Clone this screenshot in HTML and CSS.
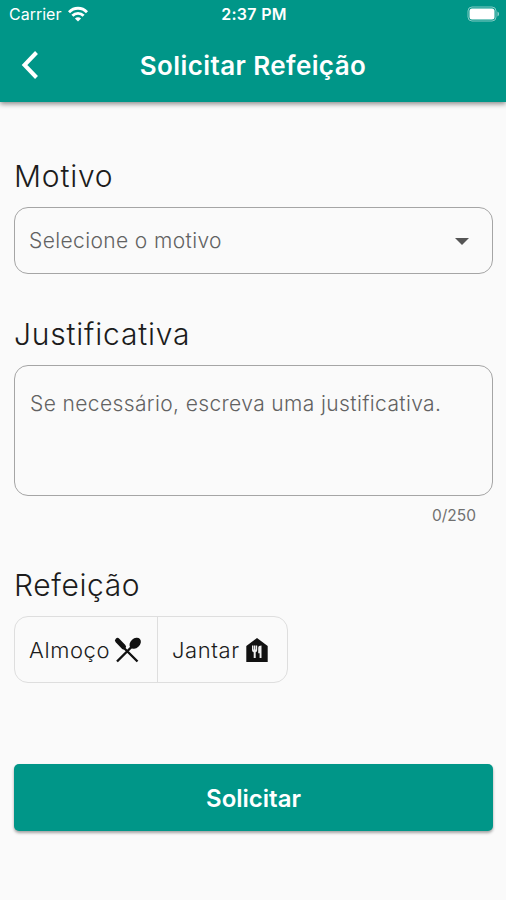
FILE: index.html
```html
<!DOCTYPE html>
<html lang="pt-BR">
<head>
    <meta charset="UTF-8">
    <meta name="viewport" content="width=device-width, initial-scale=1.0">
    <title>Solicitar Refeição</title>
    <link rel="stylesheet" href="styles.css">
</head>
<body>
    <header class="app-bar">
        <div class="status-bar">
            <div class="carrier">
                <span>Carrier</span>
                <svg class="wifi" viewBox="0 0 20 16" fill="none" stroke="#fff" stroke-width="2.9">
                    <path d="M1 6.2C6 1 14 1 19 6.2"/>
                    <path d="M4.4 9.8C7.5 6.6 12.5 6.6 15.6 9.8"/>
                    <path d="M10 15.6L6.9 12.5C8.7 10.8 11.3 10.8 13.1 12.5Z" fill="#fff" stroke="none"/>
                </svg>
            </div>
            <span class="clock">2:37 PM</span>
            <svg class="battery" viewBox="0 0 34 16">
                <rect x="1" y="1" width="28" height="14" rx="4" fill="none" stroke="#fff" stroke-opacity=".5"/>
                <rect x="2.5" y="2.5" width="25" height="11" rx="2.5" fill="#fff"/>
                <path d="M30.5 5.5C32.5 6.5 32.5 9.5 30.5 10.5Z" fill="#fff" fill-opacity=".6"/>
            </svg>
        </div>
        <div class="toolbar">
            <button type="button" class="back" aria-label="Voltar">
                <svg viewBox="0 0 20 30" fill="none" stroke="#fff" stroke-width="4">
                    <path d="M16.5 2.5L4.5 15L16.5 27.5"/>
                </svg>
            </button>
            <h1>Solicitar Refeição</h1>
        </div>
    </header>

    <form class="meal-form">
        <section class="field">
            <h2>Motivo</h2>
            <div class="box select">
                <span>Selecione o motivo</span>
                <svg class="arrow" viewBox="0 0 14 7"><path d="M0 0h14L7 7z" fill="#555"/></svg>
            </div>
        </section>

        <section class="field">
            <h2>Justificativa</h2>
            <div class="box textarea">Se necessário, escreva uma justificativa.</div>
            <div class="counter">0/250</div>
        </section>

        <section class="field">
            <h2 class="meal-title">Refeição</h2>
            <div class="toggle">
                <div class="option">
                    <span class="label">Almoço</span>
                    <!-- crossed knife and spoon -->
                    <svg class="icon" viewBox="0 0 32 32">
                        <path d="M5.500 6.500L11.500 12.800" fill="none" stroke="#111" stroke-width="5" stroke-linecap="round"/>
                        <ellipse cx="23.200" cy="9.200" rx="6.400" ry="4.700" transform="rotate(-42 23.200 9.200)"/>
                        <path d="M20 12.500L5 27.500M11 13L25.500 27.500" fill="none" stroke="#111" stroke-width="2.400"/>
                    </svg>
                </div>
                <div class="option">
                    <span class="label">Jantar</span>
                    <!-- house with fork and knife -->
                    <svg class="icon" viewBox="0 0 32 32">
                        <path d="M16 4L5.300 12V28H26.700V12z"/>
                        <path d="M11 11.500h1.500v4h.5v-4h1.500v4h.5v-4h1.200v4.500c0 1.300-.7 2-1.500 2.200V24h-2v-5.800c-1-.2-1.700-.9-1.700-2.200zM17.200 13.800c0-1.400 1.200-2.300 3.300-2.300V24h-1.900v-4.800h-1.400z" fill="#eee"/>
                    </svg>
                </div>
            </div>
        </section>

        <button type="button" class="submit">Solicitar</button>
    </form>
</body>
</html>
```

FILE: styles.css
```css
* {
    box-sizing: border-box;
}
body {
    margin: 0;
    min-height: 900px;
    background-color: #fafafa;
    color: #1c1c1c;
    font-family: Inter, "Liberation Sans", sans-serif;
}
.app-bar {
    height: 102px;
    background-color: #009688;
    color: white;
    box-shadow: 0 2px 5px rgba(0, 0, 0, 0.45);
}
.status-bar {
    display: grid;
    grid-template-columns: 1fr auto 1fr;
    align-items: center;
    height: 28px;
    padding: 0 5px 0 9px;
    font-size: 16px;
}
.carrier {
    display: flex;
    align-items: center;
    gap: 7px;
}
.wifi {
    width: 20px;
    height: 16px;
}
.clock {
    margin-right: 2px;
    font-weight: 600;
    letter-spacing: 0.3px;
}
.battery {
    width: 34px;
    height: 16px;
    justify-self: end;
}
.toolbar {
    display: grid;
    grid-template-columns: 60px 1fr 60px;
    align-items: center;
    height: 74px;
}
.back {
    padding: 0 0 0 20px;
    border: none;
    background: none;
    text-align: left;
}
.back svg {
    display: block;
    width: 20px;
    height: 30px;
}
h1 {
    margin: 0;
    padding-top: 2px;
    text-align: center;
    font-size: 26px;
    font-weight: 600;
    line-height: 72px;
    letter-spacing: 0.4px;
}
.meal-form {
    padding: 55px 13px 0 14px;
}
h2 {
    margin: 0;
    height: 50px;
    font-size: 30px;
    font-weight: 300;
    line-height: 38px;
    letter-spacing: 0.8px;
}
.meal-title {
    letter-spacing: 0.6px;
}
.box {
    border: 1px solid #a5a5a5;
    border-radius: 14px;
    color: #626262;
    font-size: 21px;
    font-weight: 300;
    letter-spacing: 0.38px;
}
.select {
    display: flex;
    align-items: center;
    justify-content: space-between;
    height: 67px;
    margin-bottom: 41px;
    padding: 0 23px 0 14px;
}
.arrow {
    width: 14px;
    height: 7px;
    margin-top: 1px;
}
.textarea {
    height: 131px;
    padding: 24px 15px;
    line-height: 28px;
}
.counter {
    height: 70px;
    padding: 10px 17px 0 0;
    color: #707070;
    font-size: 15.5px;
    line-height: 20px;
    text-align: right;
}
.toggle {
    display: inline-flex;
    height: 67px;
    border: 1px solid #dedede;
    border-radius: 14px;
    font-size: 22px;
    font-weight: 300;
}
.option {
    display: flex;
    align-items: center;
    width: 142px;
    padding-left: 14px;
}
.option + .option {
    width: 130px;
    border-left: 1px solid #dedede;
}
.label {
    letter-spacing: 0.6px;
}
.option .icon {
    width: 32px;
    height: 32px;
    margin-left: auto;
    margin-right: 13px;
    fill: #111;
}
.option + .option .icon {
    margin-right: 14px;
}
.submit {
    display: block;
    width: 100%;
    height: 67px;
    margin-top: 81px;
    padding-top: 2px;
    border: none;
    border-radius: 5px;
    background-color: #009688;
    color: white;
    font: inherit;
    font-size: 24px;
    font-weight: 600;
    box-shadow: 0 2px 3px rgba(0, 0, 0, 0.35);
}
```
